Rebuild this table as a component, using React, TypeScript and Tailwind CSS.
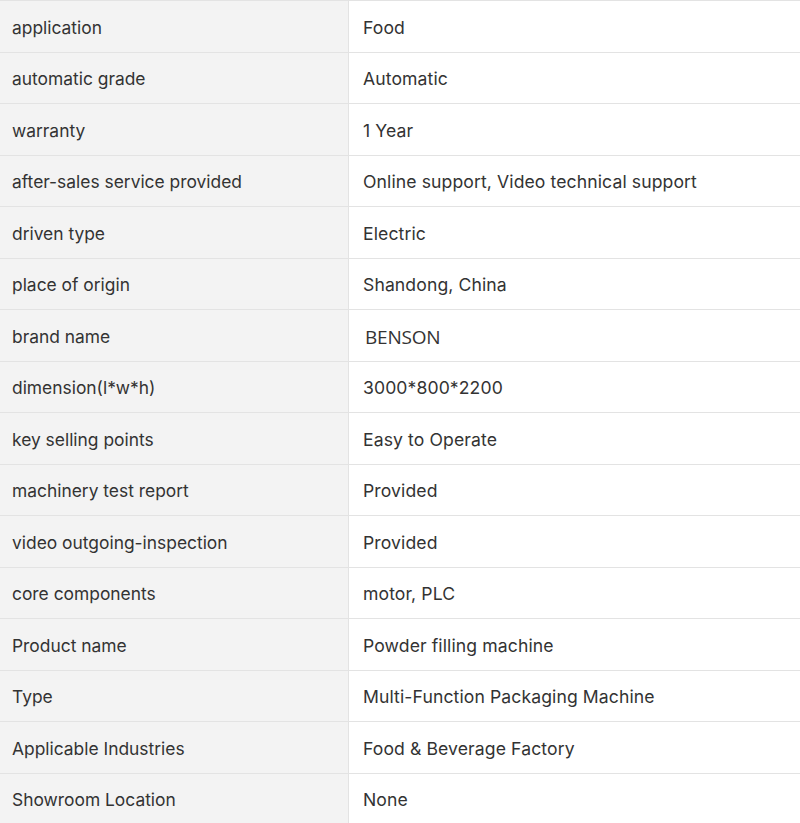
const rows: [string, string][] = [
  ["application", "Food"],
  ["automatic grade", "Automatic"],
  ["warranty", "1 Year"],
  ["after-sales service provided", "Online support, Video technical support"],
  ["driven type", "Electric"],
  ["place of origin", "Shandong, China"],
  ["brand name", "BENSON"],
  ["dimension(l*w*h)", "3000*800*2200"],
  ["key selling points", "Easy to Operate"],
  ["machinery test report", "Provided"],
  ["video outgoing-inspection", "Provided"],
  ["core components", "motor, PLC"],
  ["Product name", "Powder filling machine"],
  ["Type", "Multi-Function Packaging Machine"],
  ["Applicable Industries", "Food & Beverage Factory"],
  ["Showroom Location", "None"],
];

export default function App() {
  return (
    <div className="w-[800px] bg-white font-['Inter',sans-serif] text-[#333]">
      {rows.map(([k, v]) => (
        <div key={k} className="flex h-[51.5px] border-t border-[#e3e3e3]">
          <div className="w-[349px] shrink-0 bg-[#f3f3f3] border-r border-[#e3e3e3] flex items-center pl-3 pt-[3px] text-[17.4px]">
            {k}
          </div>
          <div className="flex-1 flex items-center pl-[14px] pt-[3px] text-[17.6px] tracking-[0.1px]">
            {k === "brand name" ? (
              <span className="pl-[2px] font-['Open_Sans',sans-serif] text-[19px] tracking-[-0.2px]">{v}</span>
            ) : (
              v
            )}
          </div>
        </div>
      ))}
    </div>
  );
}
